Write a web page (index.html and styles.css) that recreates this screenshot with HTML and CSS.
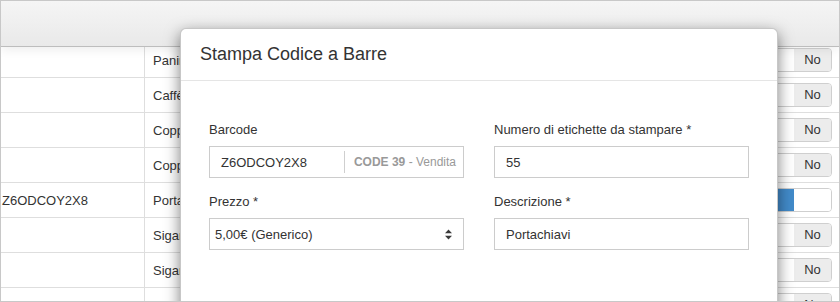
FILE: index.html
```html
<!DOCTYPE html>
<html lang="it">
<head>
<meta charset="utf-8">
<title>Stampa Codice a Barre</title>
<link rel="stylesheet" href="styles.css">
</head>
<body>
<div class="frame">
  <div class="topbar"></div>
  <div class="rows">
    <div class="row"><div class="c1"></div><div class="c2">Panini</div><div class="cm"></div><div class="c3"><span class="switch"><span class="knob"></span><span class="no">No</span></span></div></div>
    <div class="row"><div class="c1"></div><div class="c2">Caffè</div><div class="cm"></div><div class="c3"><span class="switch"><span class="knob"></span><span class="no">No</span></span></div></div>
    <div class="row"><div class="c1"></div><div class="c2">Coppa gelato</div><div class="cm"></div><div class="c3"><span class="switch"><span class="knob"></span><span class="no">No</span></span></div></div>
    <div class="row"><div class="c1"></div><div class="c2">Coppa</div><div class="cm"></div><div class="c3"><span class="switch"><span class="knob"></span><span class="no">No</span></span></div></div>
    <div class="row"><div class="c1">Z6ODCOY2X8</div><div class="c2">Portachiavi</div><div class="cm"></div><div class="c3"><span class="switch"><span class="yes">Sì</span><span class="knob wide"></span></span></div></div>
    <div class="row"><div class="c1"></div><div class="c2">Sigarette</div><div class="cm"></div><div class="c3"><span class="switch"><span class="knob"></span><span class="no">No</span></span></div></div>
    <div class="row"><div class="c1"></div><div class="c2">Sigari</div><div class="cm"></div><div class="c3"><span class="switch"><span class="knob"></span><span class="no">No</span></span></div></div>
    <div class="row"><div class="c1"></div><div class="c2">Penna</div><div class="cm"></div><div class="c3"><span class="switch"><span class="knob"></span><span class="no">No</span></span></div></div>
  </div>

  <div class="modal">
    <div class="modal-header">Stampa Codice a Barre</div>
    <div class="modal-body">
      <div class="field">
        <label class="lbl-text">Barcode</label>
        <div class="igroup">
          <span class="ival">Z6ODCOY2X8</span>
          <span class="addon"><span class="sep"></span><b>CODE 39</b>&nbsp;- Vendita</span>
        </div>
      </div>
      <div class="field">
        <label class="lbl-text">Numero di etichette da stampare *</label>
        <div class="control">55</div>
      </div>
      <div class="field">
        <label class="lbl-text">Prezzo *</label>
        <div class="control select">
          <span>5,00€ (Generico)</span>
          <svg class="arrows" width="7" height="11" viewBox="0 0 7 11"><path d="M0 4.2 L3.5 0.5 L7 4.2 Z M0 6.8 L3.5 10.5 L7 6.8 Z" fill="#3a3a3a"/></svg>
        </div>
      </div>
      <div class="field">
        <label class="lbl-text">Descrizione *</label>
        <div class="control">Portachiavi</div>
      </div>
    </div>
  </div>
</div>
</body>
</html>
```

FILE: styles.css
```css
* { box-sizing: border-box; }
html, body { margin: 0; padding: 0; background: #fff; }
body {
  font-family: "Liberation Sans", Arial, Helvetica, sans-serif;
  font-size: 13px;
  color: #333;
}
.frame {
  position: relative;
  width: 840px;
  height: 302px;
  border: 1px solid #c8c8c8;
  overflow: hidden;
  background: #fff;
}
.topbar {
  position: relative;
  z-index: 2;
  height: 46px;
  background: linear-gradient(#f5f5f5, #e9e9e9);
  border-bottom: 1px solid #bdbdbd;
  box-shadow: 0 3px 10px rgba(0,0,0,0.07);
}
.rows {
  margin-top: -4px;
}
.row {
  display: flex;
  align-items: stretch;
  height: 35px;
  border-bottom: 1px solid #dedede;
}
.c1 {
  width: 144px;
  flex: none;
  border-right: 1px solid #dedede;
  padding-left: 1px;
  display: flex;
  align-items: center;
}
.c2 {
  flex: none;
  width: 60px;
  overflow: hidden;
  white-space: nowrap;
  padding-left: 8px;
  display: flex;
  align-items: center;
}
.cm { flex: 1; }
.c3 {
  flex: none;
  padding-right: 7px;
  display: flex;
  align-items: center;
}
.switch {
  display: flex;
  height: 24px;
  border: 1px solid #cfcfcf;
  border-radius: 4px;
  overflow: hidden;
  line-height: 22px;
}
.knob {
  width: 34px;
  background: #fff;
}
.knob.wide { width: 37px; }
.no {
  width: 37px;
  background: #ececec;
  text-align: center;
  color: #333;
}
.yes {
  width: 44px;
  background: #428bca;
  color: #fff;
  text-align: center;
}

.modal {
  position: absolute;
  z-index: 3;
  left: 179px;
  top: 27px;
  width: 598px;
  height: 320px;
  background: #fff;
  border: 1px solid rgba(0,0,0,0.22);
  border-radius: 6px;
  box-shadow: 0 5px 15px rgba(0,0,0,0.5);
}
.modal-header {
  padding: 15px 19px;
  font-size: 18px;
  line-height: 21px;
  color: #333;
  border-bottom: 1px solid #e5e5e5;
}
.modal-body {
  padding: 39px 28px 0;
  display: grid;
  grid-template-columns: 255px 255px;
  column-gap: 30px;
  row-gap: 14px;
}
.lbl-text {
  display: block;
  line-height: 20px;
  margin-bottom: 6px;
  color: #333;
}
.control, .igroup {
  height: 32px;
  border: 1px solid #cccccc;
  display: flex;
  align-items: center;
  color: #333;
}
.control { padding: 0 11px; }
.control.select {
  padding: 0 11px 0 5px;
  justify-content: space-between;
}
.arrows { display: block; }
.ival {
  flex: 1;
  padding-left: 11px;
}
.addon {
  display: flex;
  align-items: center;
  font-size: 12px;
  color: #999;
  padding-right: 7px;
}
.addon b { font-weight: bold; }
.sep {
  display: block;
  width: 1px;
  height: 22px;
  background: #cfcfcf;
  margin-right: 9px;
}
```
